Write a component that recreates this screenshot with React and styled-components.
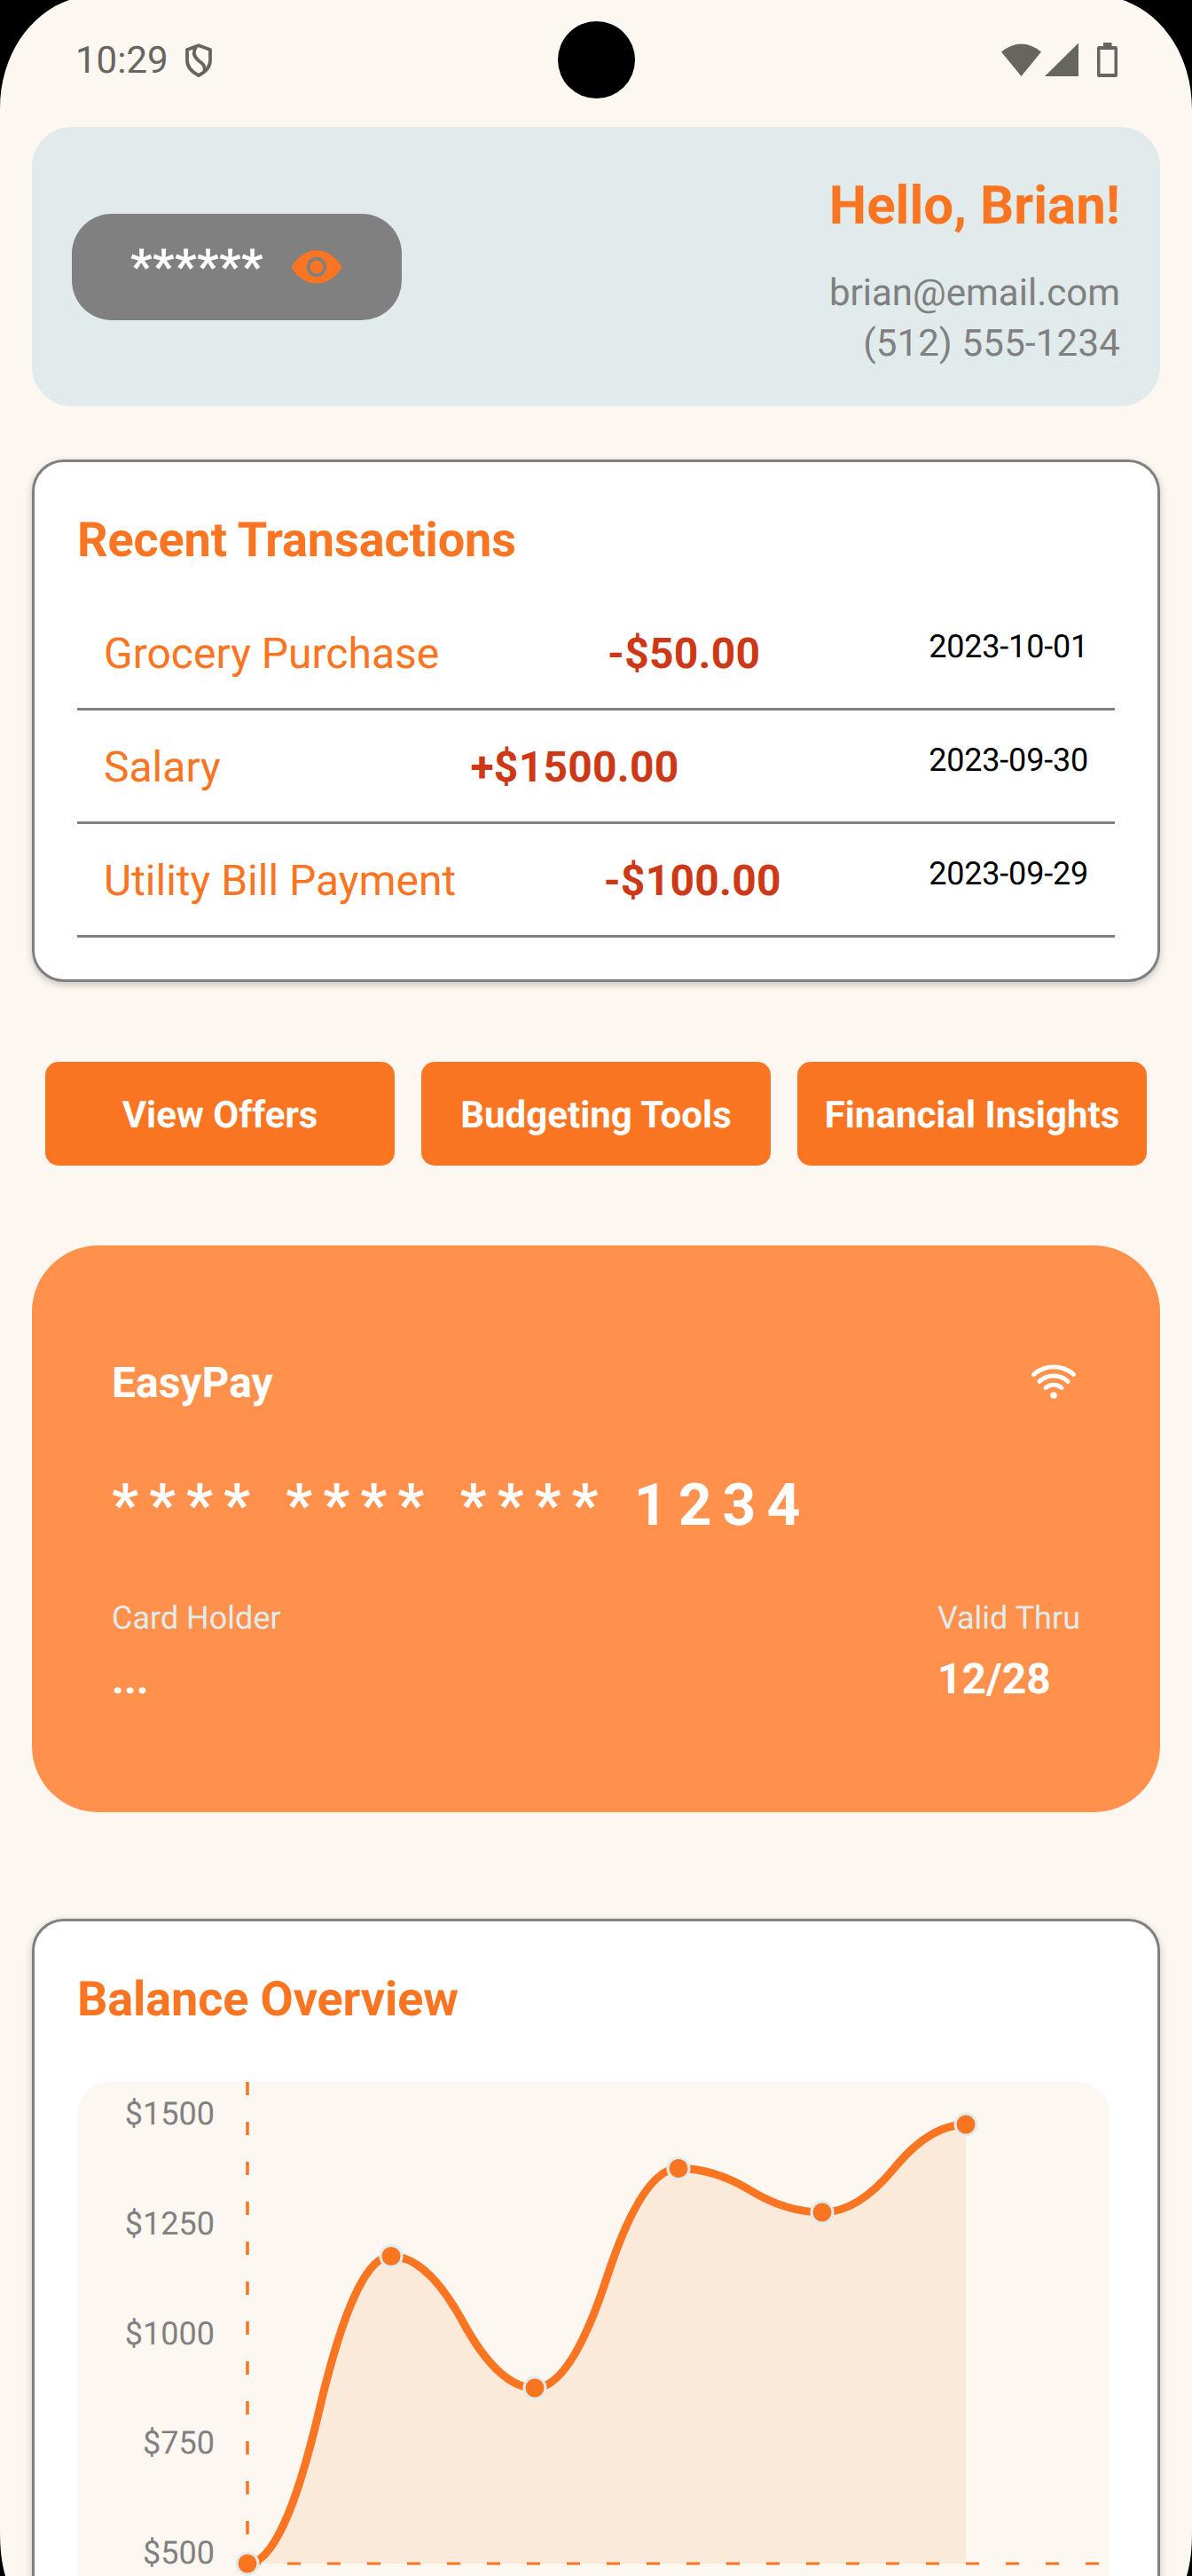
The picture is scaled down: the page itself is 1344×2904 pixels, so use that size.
import React from "react";
import styled, { createGlobalStyle } from "styled-components";
import { IoEye, IoWifi } from "react-icons/io5";

const color = {
  bg: "#fcf7f0",
  orange: "#fa7521",
  orangeSoft: "#ff914d",
  mist: "#e2ebeb",
  grey: "#808080",
  red: "#cd3917",
  status: "#666560",
};

const GlobalStyle = createGlobalStyle`
  * { box-sizing: border-box; }
  html, body { margin: 0; padding: 0; }
  body {
    background: ${color.bg};
    font-family: Roboto, "Liberation Sans", sans-serif;
    text-rendering: geometricPrecision;
  }
  button { text-rendering: inherit; }
`;

const Screen = styled.div`
  position: relative;
  display: flex;
  flex-direction: column;
  width: 1344px;
  height: 2904px;
  padding: 0 36px;
  overflow: hidden;
  background: ${color.bg};
`;

const Corners = styled.svg`
  position: absolute;
  inset: 0;
  pointer-events: none;
`;

const StatusBar = styled.div`
  display: flex;
  align-items: center;
  justify-content: space-between;
  height: 143px;
  flex: none;
  padding: 0 48px 7px 49px;
  color: ${color.status};
`;

const StatusGroup = styled.div`
  display: flex;
  align-items: center;
`;

const Clock = styled.span`
  font-size: 42px;
  line-height: 56px;
  margin-right: 18px;
  padding-top: 2px;
`;

const Camera = styled.div`
  position: absolute;
  left: 629px;
  top: 24px;
  width: 87px;
  height: 87px;
  border-radius: 50%;
  background: #000;
`;

const Header = styled.header`
  display: flex;
  justify-content: space-between;
  align-items: flex-start;
  flex: none;
  height: 315px;
  padding: 49px 45px 0;
  border-radius: 45px;
  background: ${color.mist};
`;

const BalancePill = styled.button`
  display: flex;
  align-items: center;
  width: 372px;
  height: 120px;
  margin-top: 49px;
  padding: 0 0 0 66px;
  border: 0;
  border-radius: 45px;
  background: ${color.grey};
  color: ${color.orange};
  font-family: inherit;
`;

const PillText = styled.span`
  width: 180px;
  text-align: left;
  font-size: 54px;
  line-height: 72px;
  font-weight: 700;
  letter-spacing: 0.5px;
  color: #fff;
  padding-top: 2px;
`;

const Profile = styled.div`
  display: flex;
  flex-direction: column;
  align-items: flex-end;
`;

const Greeting = styled.h1`
  margin: 0 0 30px;
  font-size: 60px;
  line-height: 80px;
  font-weight: 700;
  color: ${color.orange};
`;

const Contact = styled.span`
  font-size: 42px;
  line-height: 57px;
  letter-spacing: ${(p) => p.$tracking || 0}px;
  color: ${color.grey};
`;

const Panel = styled.section`
  flex: none;
  height: ${(p) => p.$height}px;
  margin-top: ${(p) => p.$gap}px;
  padding: 53px 48px 0;
  border: 3px solid ${color.grey};
  border-radius: 36px;
  background: #fff;
  box-shadow: 0 3px 9px rgba(0, 0, 0, 0.22);
`;

const PanelTitle = styled.h2`
  margin: 0 0 ${(p) => p.$below}px;
  font-size: 54px;
  line-height: 72px;
  font-weight: 700;
  letter-spacing: -0.12px;
  color: ${color.orange};
`;

const Transaction = styled.div`
  display: flex;
  justify-content: space-between;
  align-items: flex-start;
  height: 128px;
  padding: 32px 30px 0;
  border-bottom: 3px solid ${color.grey};
`;

const Description = styled.span`
  font-size: 48px;
  line-height: 64px;
  color: ${color.orange};
`;

const Amount = styled.span`
  font-size: 48px;
  line-height: 64px;
  font-weight: 700;
  letter-spacing: 0.25px;
  color: ${color.red};
`;

const When = styled.span`
  font-size: 36px;
  line-height: 48px;
  letter-spacing: -0.2px;
  color: #000;
`;

const Actions = styled.div`
  display: grid;
  grid-template-columns: repeat(3, 1fr);
  gap: 30px;
  flex: none;
  margin: 90px 15px;
`;

const ActionButton = styled.button`
  height: 117px;
  padding: 4px 0 0;
  border: 0;
  border-radius: 15px;
  background: ${color.orange};
  color: #fff;
  font-family: inherit;
  font-size: 42px;
  font-weight: 700;
  white-space: nowrap;
`;

const PayCard = styled.section`
  flex: none;
  height: 639px;
  padding: 123px 90px 0;
  border-radius: 75px;
  background: ${color.orangeSoft};
  color: #fff;
`;

const CardRow = styled.div`
  display: flex;
  justify-content: space-between;
  align-items: flex-start;
`;

const CardStrong = styled.div`
  font-size: 48px;
  line-height: 64px;
  font-weight: 700;
`;

const CardNumber = styled.div`
  margin: 63px 0 58px;
  font-size: 66px;
  line-height: 88px;
  font-weight: 700;
  letter-spacing: 12px;
  white-space: nowrap;
`;

const CardLabel = styled.div`
  margin-bottom: 13px;
  font-size: 36px;
  line-height: 48px;
  color: ${color.mist};
`;

const Chart = styled.svg`
  display: block;
`;

const transactions = [
  { name: "Grocery Purchase", amount: "-$50.00", date: "2023-10-01" },
  { name: "Salary", amount: "+$1500.00", date: "2023-09-30" },
  { name: "Utility Bill Payment", amount: "-$100.00", date: "2023-09-29" },
];

const actions = ["View Offers", "Budgeting Tools", "Financial Insights"];
const balances = [500, 1200, 900, 1400, 1300, 1500];
const ticks = [1500, 1250, 1000, 750, 500];

const AXIS_X = 192;
const BASE_Y = 543;
const toY = (v) => BASE_Y - (v - 500) * 0.495;
const points = balances.map((v, i) => [AXIS_X + i * 162, toY(v)]);

const curve = points.slice(1).reduce((d, [x, y], i) => {
  const [px, py] = points[i];
  const mx = (px + x) / 2;
  const my = (py + y) / 2;
  return `${d} Q${(mx + px) / 2} ${py} ${mx} ${my} Q${(mx + x) / 2} ${y} ${x} ${y}`;
}, `M${points[0][0]} ${points[0][1]}`);

function BalanceChart() {
  const lastX = points[points.length - 1][0];
  return (
    <Chart width="1164" height="660" viewBox="0 0 1164 660">
      <rect width="1164" height="660" rx="36" ry="36" fill={color.bg} />
      <path d={`M${AXIS_X} 0V${BASE_Y}`} stroke={color.orange} strokeWidth="3.5" strokeDasharray="15 30" />
      <path d={`M${AXIS_X} ${BASE_Y}H1164`} stroke={color.orange} strokeWidth="3" strokeDasharray="15 30" />
      {ticks.map((t) => (
        <text key={t} x="155" y={toY(t)} textAnchor="end" fontSize="36" fill={color.grey}>
          ${t}
        </text>
      ))}
      <path d={`${curve} V${BASE_Y} H${lastX} L${AXIS_X} ${BASE_Y} Z`} fill={color.orange} fillOpacity="0.1" />
      <path d={curve} fill="none" stroke={color.orange} strokeWidth="9" />
      {points.map(([x, y]) => (
        <circle key={x} cx={x} cy={y} r="12" fill={color.orange} stroke={color.mist} strokeWidth="3" />
      ))}
    </Chart>
  );
}

function ShieldIcon() {
  return (
    <svg width="32" height="38" viewBox="0 0 32 38" fill="none" stroke="currentColor" strokeWidth="3.8" strokeLinejoin="round">
      <path d="M16 2.2 29 7v12c0 7.500-5 13-13 17C8 32 3 26.500 3 19V7Z" />
      <path d="M13 4C9.500 9 9.500 13.500 15 18.500C21 23 23.500 25 22.500 31.500" />
    </svg>
  );
}

function SystemIcons() {
  return (
    <svg width="131" height="40" viewBox="0 0 131 40" fill="currentColor">
      <path d="M0 10.500Q22.500-7.500 45 10.500L22.500 38Z" />
      <path d="M49 38 87 .5V38Z" />
      <path fillRule="evenodd" d="M115 0h9.500v4H129a2 2 0 0 1 2 2v31a2 2 0 0 1-2 2h-19a2 2 0 0 1-2-2V6a2 2 0 0 1 2-2h5ZM111.500 8v27h16V8Z" />
    </svg>
  );
}

export default function App() {
  return (
    <Screen>
      <GlobalStyle />
      <StatusBar>
        <StatusGroup>
          <Clock>10:29</Clock>
          <ShieldIcon />
        </StatusGroup>
        <SystemIcons />
      </StatusBar>
      <Camera />

      <Header>
        <BalancePill>
          <PillText>******</PillText>
          <IoEye size={60} />
        </BalancePill>
        <Profile>
          <Greeting>Hello, Brian!</Greeting>
          <Contact>brian@email.com</Contact>
          <Contact $tracking={0.2}>(512) 555-1234</Contact>
        </Profile>
      </Header>

      <Panel $height={589} $gap={60}>
        <PanelTitle $below={27}>Recent Transactions</PanelTitle>
        {transactions.map((t) => (
          <Transaction key={t.name}>
            <Description>{t.name}</Description>
            <Amount>{t.amount}</Amount>
            <When>{t.date}</When>
          </Transaction>
        ))}
      </Panel>

      <Actions>
        {actions.map((a) => (
          <ActionButton key={a}>{a}</ActionButton>
        ))}
      </Actions>

      <PayCard>
        <CardRow>
          <CardStrong>EasyPay</CardStrong>
          <IoWifi size={60} />
        </CardRow>
        <CardNumber>**** **** **** 1234</CardNumber>
        <CardRow>
          <div>
            <CardLabel>Card Holder</CardLabel>
            <CardStrong>...</CardStrong>
          </div>
          <div>
            <CardLabel>Valid Thru</CardLabel>
            <CardStrong>12/28</CardStrong>
          </div>
        </CardRow>
      </PayCard>

      <Panel $height={900} $gap={120}>
        <PanelTitle $below={56}>Balance Overview</PanelTitle>
        <BalanceChart />
      </Panel>

      <Corners width="1344" height="2904" viewBox="0 0 1344 2904">
        <path d="M0 0H78C34 15 0 62 0 123Z" />
        <path d="M1344 0H1266C1310 15 1344 62 1344 123Z" />
        <path d="M0 2854C0 2875 2 2890 6 2904H0Z" />
        <path d="M1344 2854C1344 2875 1342 2890 1338 2904H1344Z" />
      </Corners>
    </Screen>
  );
}
